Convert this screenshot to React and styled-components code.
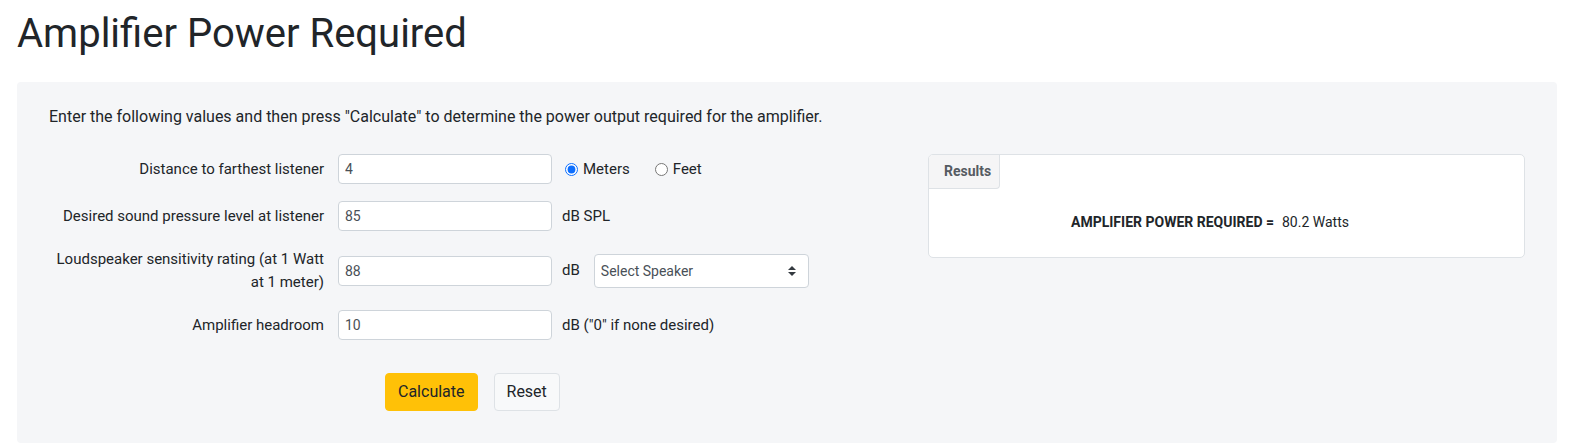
import React from "react";
import styled, { createGlobalStyle } from "styled-components";

const GlobalStyle = createGlobalStyle`
  body {
    margin: 0;
    background: #fff;
    font-family: Roboto, "Liberation Sans", Arial, sans-serif;
    color: #212529;
  }
`;

const FIELDS = [
  { label: "Distance to farthest listener", value: "4", extra: "radios" },
  { label: "Desired sound pressure level at listener", value: "85", extra: "dB SPL" },
  { label: "Loudspeaker sensitivity rating (at 1 Watt at 1 meter)", value: "88", extra: "select" },
  { label: "Amplifier headroom", value: "10", extra: 'dB ("0" if none desired)' },
];

const App = () => {
  const renderExtra = (extra) => {
    if (extra === "radios") {
      return (
        <RadioGroup>
          <RadioLabel>
            <Radio type="radio" name="unit" defaultChecked />
            Meters
          </RadioLabel>
          <RadioLabel>
            <Radio type="radio" name="unit" />
            Feet
          </RadioLabel>
        </RadioGroup>
      );
    }
    if (extra === "select") {
      return (
        <>
          <span>dB</span>
          <SelectWrap>
            <Select defaultValue="">
              <option value="">Select Speaker</option>
            </Select>
            <SelectArrow width="8" height="10" viewBox="0 0 8 10">
              <path d="M0 4 L4 0 L8 4 Z" />
              <path d="M0 6 L4 10 L8 6 Z" />
            </SelectArrow>
          </SelectWrap>
        </>
      );
    }
    return <span>{extra}</span>;
  };

  return (
    <Page>
      <GlobalStyle />
      <Title>Amplifier Power Required</Title>
      <Panel>
        <Intro>
          Enter the following values and then press "Calculate" to determine the power
          output required for the amplifier.
        </Intro>
        <Columns>
          <Form>
            {FIELDS.map((f) => (
              <FieldRow key={f.label}>
                <Label>{f.label}</Label>
                <Input type="text" defaultValue={f.value} />
                <Extra>{renderExtra(f.extra)}</Extra>
              </FieldRow>
            ))}
            <ButtonRow>
              <Button $variant="warning">Calculate</Button>
              <Button>Reset</Button>
            </ButtonRow>
          </Form>
          <ResultsCard>
            <Tab>Results</Tab>
            <ResultBody>
              <ResultLabel>AMPLIFIER POWER REQUIRED =</ResultLabel>
              <ResultValue>80.2 Watts</ResultValue>
            </ResultBody>
          </ResultsCard>
        </Columns>
      </Panel>
    </Page>
  );
};

const Page = styled.div`
  padding: 0 24px 0 17px;
`;

const Title = styled.h1`
  margin: 10px 0 24px;
  font-size: 40px;
  font-weight: 400;
  line-height: 1.2;
`;

const Panel = styled.div`
  background: #f5f6f8;
  border-radius: 4px;
  padding: 23px 32px 32px;
`;

const Intro = styled.p`
  margin: 0 0 25px;
  font-size: 16px;
  line-height: 1.5;
`;

const Columns = styled.div`
  display: grid;
  grid-template-columns: 1fr 597px;
  column-gap: 30px;
  align-items: start;
`;

const Form = styled.div`
  display: flex;
  flex-direction: column;
  gap: 17px;
`;

const FieldRow = styled.div`
  display: grid;
  grid-template-columns: 289px 214px 1fr;
  align-items: center;
  font-size: 15px;
  line-height: 1.5;
`;

const Label = styled.label`
  text-align: right;
  padding-right: 14px;
`;

const Input = styled.input`
  box-sizing: border-box;
  height: 30px;
  width: 100%;
  padding: 0 6px;
  border: 1px solid #ced4da;
  border-radius: 4px;
  background: #fff;
  font-family: inherit;
  font-size: 14px;
  color: #495057;
`;

const Extra = styled.div`
  display: flex;
  align-items: center;
  padding-left: 10px;
`;

const RadioGroup = styled.div`
  display: flex;
  align-items: center;
  margin-left: 3px;
`;

const RadioLabel = styled.label`
  display: flex;
  align-items: center;
  gap: 5px;
  margin-right: 25px;
`;

const Radio = styled.input`
  margin: 0;
  width: 13px;
  height: 13px;
  accent-color: #0d6efd;
`;

const SelectWrap = styled.div`
  position: relative;
  margin-left: 14px;
  width: 215px;
`;

const Select = styled.select`
  box-sizing: border-box;
  appearance: none;
  width: 100%;
  height: 34px;
  padding: 0 28px 0 6px;
  border: 1px solid #ced4da;
  border-radius: 4px;
  background: #fff;
  font-family: inherit;
  font-size: 14px;
  color: #495057;
`;

const SelectArrow = styled.svg`
  position: absolute;
  right: 13px;
  top: 12px;
  fill: #343a40;
  pointer-events: none;
`;

const ButtonRow = styled.div`
  display: flex;
  gap: 16px;
  margin-top: 16px;
  padding-left: 336px;
`;

const Button = styled.button`
  padding: 6px 12px;
  border: 1px solid ${(p) => (p.$variant === "warning" ? "#ffc107" : "#dee2e6")};
  border-radius: 4px;
  background: ${(p) => (p.$variant === "warning" ? "#ffc107" : "#f8f9fa")};
  color: #212529;
  font-family: inherit;
  font-size: 16px;
  line-height: 24px;
  cursor: pointer;
`;

const ResultsCard = styled.div`
  background: #fff;
  border: 1px solid #dee2e6;
  border-radius: 5px;
  overflow: hidden;
`;

const Tab = styled.div`
  display: inline-block;
  height: 33px;
  line-height: 33px;
  padding: 0 8px 0 15px;
  background: #f5f5f6;
  border-right: 1px solid #dee2e6;
  border-bottom: 1px solid #dee2e6;
  border-bottom-right-radius: 4px;
  font-size: 14px;
  font-weight: 700;
  color: #555b62;
  vertical-align: top;
`;

const ResultBody = styled.div`
  display: grid;
  grid-template-columns: 345px 1fr;
  column-gap: 8px;
  padding: 23px 0 24px;
  font-size: 14px;
  line-height: 21px;
`;

const ResultLabel = styled.span`
  text-align: right;
  font-weight: 700;
`;

const ResultValue = styled.span``;

export default App;
